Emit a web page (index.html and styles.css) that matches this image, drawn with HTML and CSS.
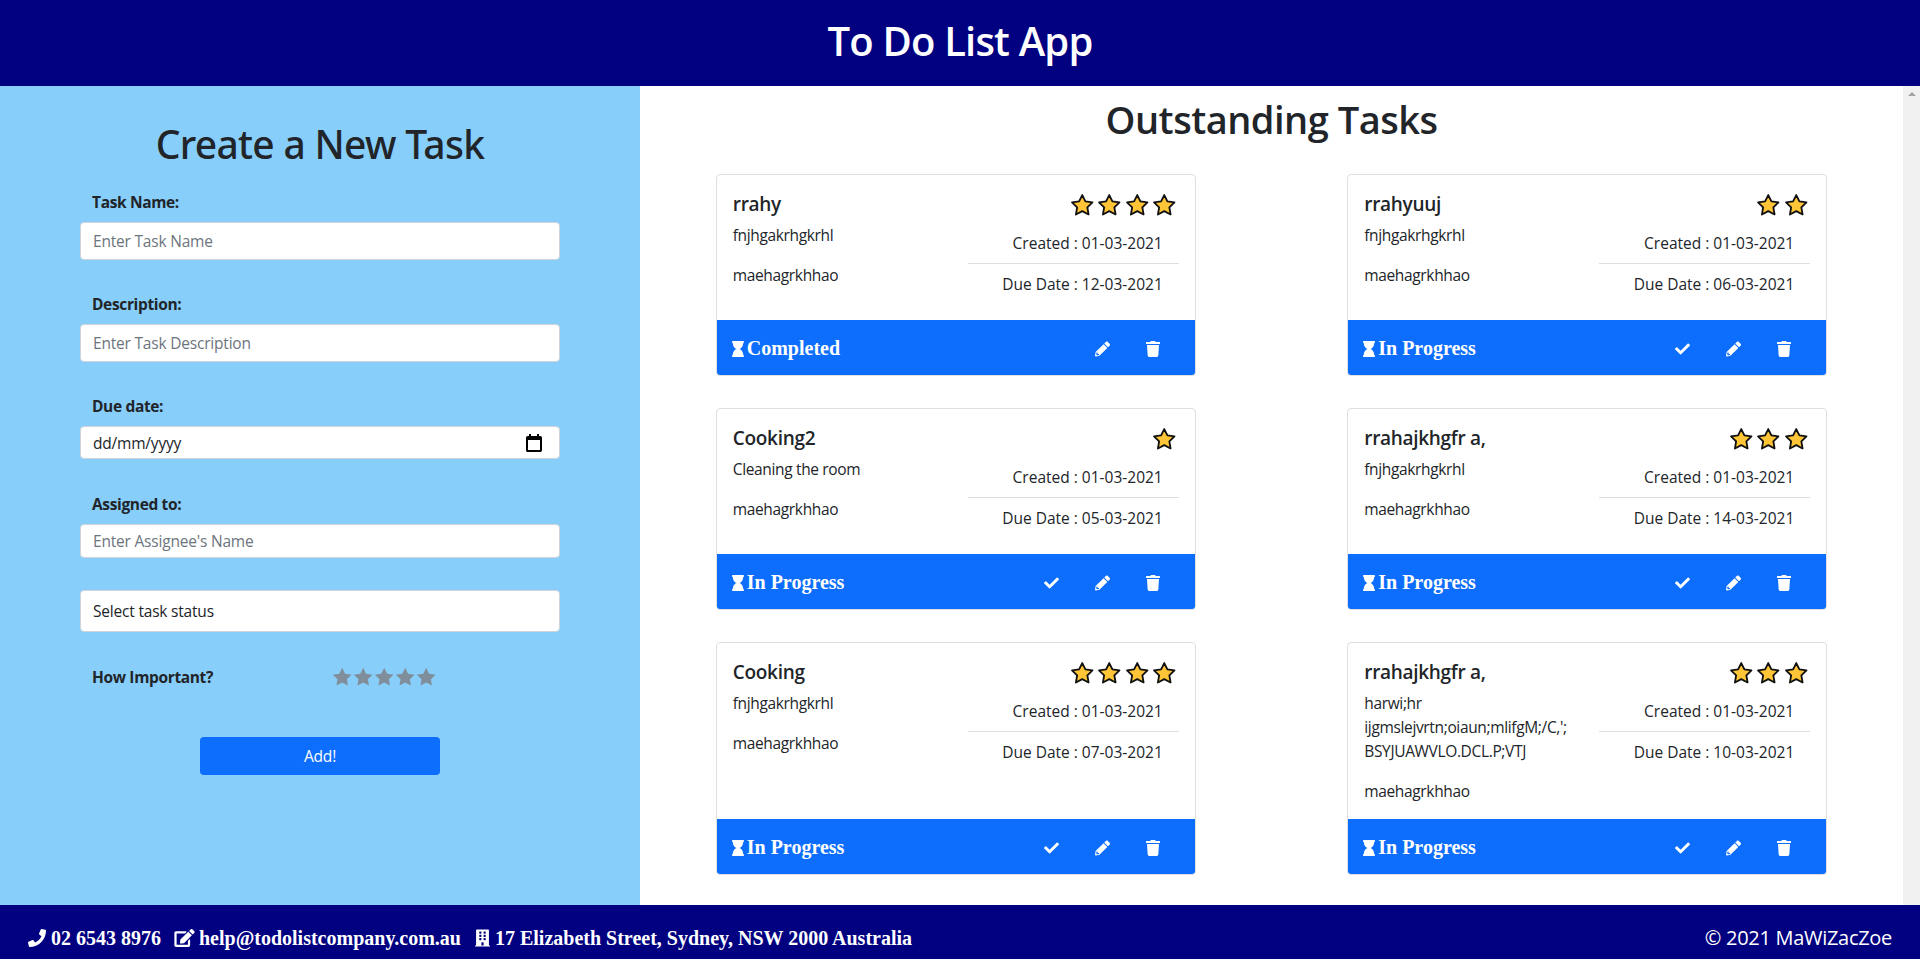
FILE: index.html
```html
<!DOCTYPE html>
<html lang="en">
<head>
  <meta charset="UTF-8">
  <meta name="viewport" content="width=device-width, initial-scale=1.0">
  <title>To Do List App</title>
  <link rel="stylesheet" href="styles.css">
</head>
<body>
  <!-- icon set, reused below with <use> -->
  <svg class="icon-defs" xmlns="http://www.w3.org/2000/svg">
    <symbol id="i-star" viewBox="0 0 24 24"><polygon points="12 2 15.09 8.26 22 9.27 17 14.14 18.18 21.02 12 17.77 5.82 21.02 7 14.14 2 9.27 8.91 8.26"/></symbol>
    <symbol id="i-check" viewBox="0 0 512 512"><path d="M173.898 439.404l-166.4-166.4c-9.997-9.997-9.997-26.206 0-36.204l36.203-36.204c9.997-9.998 26.207-9.998 36.204 0L192 312.69 432.095 72.596c9.997-9.997 26.207-9.997 36.204 0l36.203 36.204c9.997 9.997 9.997 26.206 0 36.204l-294.4 294.401c-9.998 9.997-26.207 9.997-36.204-.001z"/></symbol>
    <symbol id="i-pencil" viewBox="0 0 512 512"><path d="M497.9 142.1l-46.1 46.1c-4.7 4.7-12.3 4.7-17 0l-111-111c-4.7-4.7-4.7-12.3 0-17l46.1-46.1c18.7-18.7 49.1-18.7 67.9 0l60.1 60.1c18.8 18.7 18.8 49.1 0 67.9zM284.2 99.8L21.6 362.4.4 483.9c-2.9 16.4 11.4 30.6 27.8 27.8l121.5-21.3 262.6-262.6c4.7-4.7 4.7-12.3 0-17l-111-111c-4.8-4.7-12.4-4.7-17.1 0zM88 424h48v36.3l-64.5 11.3-31.1-31.1L51.7 376H88v48z"/></symbol>
    <symbol id="i-trash" viewBox="0 0 448 512"><path d="M432 32H312l-9.4-18.7A24 24 0 0 0 281.1 0H166.8a23.72 23.72 0 0 0-21.4 13.3L136 32H16A16 16 0 0 0 0 48v32a16 16 0 0 0 16 16h416a16 16 0 0 0 16-16V48a16 16 0 0 0-16-16zM53.2 467a48 48 0 0 0 47.9 45h245.8a48 48 0 0 0 47.9-45L416 128H32z"/></symbol>
    <symbol id="i-hourglass" viewBox="0 0 384 512"><path d="M360 64c13.255 0 24-10.745 24-24V24c0-13.255-10.745-24-24-24H24C10.745 0 0 10.745 0 24v16c0 13.255 10.745 24 24 24 0 90.965 51.016 167.734 120.842 192C75.016 280.266 24 357.035 24 448c-13.255 0-24 10.745-24 24v16c0 13.255 10.745 24 24 24h336c13.255 0 24-10.745 24-24v-16c0-13.255-10.745-24-24-24 0-90.965-51.016-167.734-120.842-192C308.984 231.734 360 154.965 360 64z"/></symbol>
    <symbol id="i-phone" viewBox="0 0 512 512"><path d="M493.4 24.6l-104-24c-11.3-2.6-22.9 3.3-27.5 13.9l-48 112c-4.2 9.8-1.4 21.3 6.9 28l60.6 49.6c-36 76.7-98.9 140.5-177.2 177.2l-49.6-60.6c-6.8-8.3-18.2-11.1-28-6.9l-112 48C3.9 366.5-2 378.1.6 389.4l24 104C27.1 504.2 36.7 512 48 512c256.1 0 464-207.5 464-464 0-11.2-7.7-20.9-18.6-23.4z"/></symbol>
    <symbol id="i-edit" viewBox="0 0 576 512"><path d="M402.6 83.2l90.2 90.2c3.8 3.8 3.8 10 0 13.8L274.4 405.6l-92.8 10.3c-12.4 1.4-22.9-9.1-21.5-21.5l10.3-92.8L388.8 83.2c3.8-3.8 10-3.8 13.8 0zm162-22.9l-48.8-48.8c-15.2-15.2-39.9-15.2-55.2 0l-35.4 35.4c-3.8 3.8-3.8 10 0 13.8l90.2 90.2c3.8 3.8 10 3.8 13.8 0l35.4-35.4c15.2-15.3 15.2-40 0-55.2zM384 346.2V448H64V128h231.8c3.2 0 6.2-1.3 8.5-3.5l40-40c7.6-7.6 2.2-20.5-8.5-20.5H48C21.5 64 0 85.5 0 112v352c0 26.5 21.5 48 48 48h352c26.5 0 48-21.5 48-48V306.2c0-10.7-12.9-16-20.5-8.5l-40 40c-2.2 2.3-3.5 5.3-3.5 8.5z"/></symbol>
    <symbol id="i-building" viewBox="0 0 448 512"><path d="M436 480h-20V24c0-13.255-10.745-24-24-24H56C42.745 0 32 10.745 32 24v456H12c-6.627 0-12 5.373-12 12v20h448v-20c0-6.627-5.373-12-12-12zM128 76c0-6.627 5.373-12 12-12h40c6.627 0 12 5.373 12 12v40c0 6.627-5.373 12-12 12h-40c-6.627 0-12-5.373-12-12V76zm0 96c0-6.627 5.373-12 12-12h40c6.627 0 12 5.373 12 12v40c0 6.627-5.373 12-12 12h-40c-6.627 0-12-5.373-12-12v-40zm52 148h-40c-6.627 0-12-5.373-12-12v-40c0-6.627 5.373-12 12-12h40c6.627 0 12 5.373 12 12v40c0 6.627-5.373 12-12 12zm76 160h-64v-84c0-6.627 5.373-12 12-12h40c6.627 0 12 5.373 12 12v84zm64-172c0 6.627-5.373 12-12 12h-40c-6.627 0-12-5.373-12-12v-40c0-6.627 5.373-12 12-12h40c6.627 0 12 5.373 12 12v40zm0-96c0 6.627-5.373 12-12 12h-40c-6.627 0-12-5.373-12-12v-40c0-6.627 5.373-12 12-12h40c6.627 0 12 5.373 12 12v40zm0-96c0 6.627-5.373 12-12 12h-40c-6.627 0-12-5.373-12-12V76c0-6.627 5.373-12 12-12h40c6.627 0 12 5.373 12 12v40z"/></symbol>
    <symbol id="i-calendar" viewBox="0 0 16 18"><path d="M3 0h2v2h6V0h2v2h1.2C15.2 2 16 2.800 16 3.800v12.400c0 1-.8 1.800-1.800 1.800H1.800C.8 18 0 17.200 0 16.200V3.800C0 2.800.8 2 1.800 2H3V0zM2 6v10h12V6H2z"/></symbol>
  </svg>

  <header class="top-bar">
    <h1>To Do List App</h1>
  </header>

  <main class="layout">
    <section class="create-panel">
      <h2 class="create-title">Create a New Task</h2>
      <form class="task-form">
        <div class="field">
          <label for="task-name">Task Name:</label>
          <input class="control control-lg" id="task-name" type="text" placeholder="Enter Task Name">
        </div>
        <div class="field">
          <label for="task-desc">Description:</label>
          <input class="control control-lg" id="task-desc" type="text" placeholder="Enter Task Description">
        </div>
        <div class="field">
          <label>Due date:</label>
          <div class="control control-date">
            <span>dd/mm/yyyy</span>
            <svg class="calendar"><use href="#i-calendar"/></svg>
          </div>
        </div>
        <div class="field field-assign">
          <label for="task-who">Assigned to:</label>
          <input class="control control-sm" id="task-who" type="text" placeholder="Enter Assignee's Name">
        </div>
        <select class="control control-select">
          <option>Select task status</option>
        </select>
        <div class="rating-row">
          <label>How Important?</label>
          <div class="rating">
            <svg><use href="#i-star"/></svg>
            <svg><use href="#i-star"/></svg>
            <svg><use href="#i-star"/></svg>
            <svg><use href="#i-star"/></svg>
            <svg><use href="#i-star"/></svg>
          </div>
        </div>
        <button class="add-btn" type="button">Add!</button>
      </form>
    </section>

    <section class="tasks-panel">
      <h2 class="tasks-title">Outstanding Tasks</h2>
      <div class="task-grid">

        <article class="task-card">
          <div class="task-body">
            <div class="task-info">
              <h3>rrahy</h3>
              <p>fnjhgakrhgkrhl</p>
              <p>maehagrkhhao</p>
            </div>
            <div class="task-meta">
              <div class="stars">
                <svg><use href="#i-star"/></svg><svg><use href="#i-star"/></svg><svg><use href="#i-star"/></svg><svg><use href="#i-star"/></svg>
              </div>
              <div class="date">Created : 01-03-2021</div>
              <hr>
              <div class="date">Due Date : 12-03-2021</div>
            </div>
          </div>
          <div class="task-foot">
            <div class="status"><svg class="hourglass"><use href="#i-hourglass"/></svg>Completed</div>
            <div class="actions">
              <svg class="a-pencil"><use href="#i-pencil"/></svg>
              <svg class="a-trash"><use href="#i-trash"/></svg>
            </div>
          </div>
        </article>

        <article class="task-card">
          <div class="task-body">
            <div class="task-info">
              <h3>rrahyuuj</h3>
              <p>fnjhgakrhgkrhl</p>
              <p>maehagrkhhao</p>
            </div>
            <div class="task-meta">
              <div class="stars">
                <svg><use href="#i-star"/></svg><svg><use href="#i-star"/></svg>
              </div>
              <div class="date">Created : 01-03-2021</div>
              <hr>
              <div class="date">Due Date : 06-03-2021</div>
            </div>
          </div>
          <div class="task-foot">
            <div class="status"><svg class="hourglass"><use href="#i-hourglass"/></svg>In Progress</div>
            <div class="actions">
              <svg class="a-check"><use href="#i-check"/></svg>
              <svg class="a-pencil"><use href="#i-pencil"/></svg>
              <svg class="a-trash"><use href="#i-trash"/></svg>
            </div>
          </div>
        </article>

        <article class="task-card">
          <div class="task-body">
            <div class="task-info">
              <h3>Cooking2</h3>
              <p>Cleaning the room</p>
              <p>maehagrkhhao</p>
            </div>
            <div class="task-meta">
              <div class="stars">
                <svg><use href="#i-star"/></svg>
              </div>
              <div class="date">Created : 01-03-2021</div>
              <hr>
              <div class="date">Due Date : 05-03-2021</div>
            </div>
          </div>
          <div class="task-foot">
            <div class="status"><svg class="hourglass"><use href="#i-hourglass"/></svg>In Progress</div>
            <div class="actions">
              <svg class="a-check"><use href="#i-check"/></svg>
              <svg class="a-pencil"><use href="#i-pencil"/></svg>
              <svg class="a-trash"><use href="#i-trash"/></svg>
            </div>
          </div>
        </article>

        <article class="task-card">
          <div class="task-body">
            <div class="task-info">
              <h3>rrahajkhgfr a,</h3>
              <p>fnjhgakrhgkrhl</p>
              <p>maehagrkhhao</p>
            </div>
            <div class="task-meta">
              <div class="stars">
                <svg><use href="#i-star"/></svg><svg><use href="#i-star"/></svg><svg><use href="#i-star"/></svg>
              </div>
              <div class="date">Created : 01-03-2021</div>
              <hr>
              <div class="date">Due Date : 14-03-2021</div>
            </div>
          </div>
          <div class="task-foot">
            <div class="status"><svg class="hourglass"><use href="#i-hourglass"/></svg>In Progress</div>
            <div class="actions">
              <svg class="a-check"><use href="#i-check"/></svg>
              <svg class="a-pencil"><use href="#i-pencil"/></svg>
              <svg class="a-trash"><use href="#i-trash"/></svg>
            </div>
          </div>
        </article>

        <article class="task-card">
          <div class="task-body">
            <div class="task-info">
              <h3>Cooking</h3>
              <p>fnjhgakrhgkrhl</p>
              <p>maehagrkhhao</p>
            </div>
            <div class="task-meta">
              <div class="stars">
                <svg><use href="#i-star"/></svg><svg><use href="#i-star"/></svg><svg><use href="#i-star"/></svg><svg><use href="#i-star"/></svg>
              </div>
              <div class="date">Created : 01-03-2021</div>
              <hr>
              <div class="date">Due Date : 07-03-2021</div>
            </div>
          </div>
          <div class="task-foot">
            <div class="status"><svg class="hourglass"><use href="#i-hourglass"/></svg>In Progress</div>
            <div class="actions">
              <svg class="a-check"><use href="#i-check"/></svg>
              <svg class="a-pencil"><use href="#i-pencil"/></svg>
              <svg class="a-trash"><use href="#i-trash"/></svg>
            </div>
          </div>
        </article>

        <article class="task-card">
          <div class="task-body">
            <div class="task-info">
              <h3>rrahajkhgfr a,</h3>
              <p>harwi;hr<br>ijgmslejvrtn;oiaun;mlifgM;/C,';<br>BSYJUAWVLO.DCL.P;VTJ</p>
              <p>maehagrkhhao</p>
            </div>
            <div class="task-meta">
              <div class="stars">
                <svg><use href="#i-star"/></svg><svg><use href="#i-star"/></svg><svg><use href="#i-star"/></svg>
              </div>
              <div class="date">Created : 01-03-2021</div>
              <hr>
              <div class="date">Due Date : 10-03-2021</div>
            </div>
          </div>
          <div class="task-foot">
            <div class="status"><svg class="hourglass"><use href="#i-hourglass"/></svg>In Progress</div>
            <div class="actions">
              <svg class="a-check"><use href="#i-check"/></svg>
              <svg class="a-pencil"><use href="#i-pencil"/></svg>
              <svg class="a-trash"><use href="#i-trash"/></svg>
            </div>
          </div>
        </article>

      </div>
    </section>

    <div class="scroll-track"><span class="scroll-arrow"></span></div>
  </main>

  <footer class="bottom-bar">
    <div class="contact">
      <svg class="c-phone"><use href="#i-phone"/></svg><span class="c-text">02 6543 8976</span>
      <svg class="c-edit"><use href="#i-edit"/></svg><span class="c-text">help@todolistcompany.com.au</span>
      <svg class="c-building"><use href="#i-building"/></svg><span class="c-text">17 Elizabeth Street, Sydney, NSW 2000 Australia</span>
    </div>
    <div class="copyright">&copy; 2021 MaWiZacZoe</div>
  </footer>
</body>
</html>
```

FILE: styles.css
```css
* {
  box-sizing: border-box;
}

html, body {
  height: 100%;
}

body {
  margin: 0;
  display: flex;
  flex-direction: column;
  height: 959px;
  overflow: hidden;
  font-family: "Open Sans", "Noto Sans", sans-serif;
  font-size: 15.5px;
  line-height: 24px;
  letter-spacing: -0.35px;
  color: #212529;
  background-color: #fff;
}

.icon-defs {
  display: none;
}

.top-bar {
  flex: 0 0 86px;
  display: flex;
  align-items: center;
  justify-content: center;
  padding-bottom: 4px;
  background-color: #000080;
  color: #fff;
}

.top-bar h1 {
  margin: 0;
  font-size: 40px;
  font-weight: 600;
  line-height: 48px;
  letter-spacing: -0.8px;
}

.layout {
  flex: 1;
  min-height: 0;
  display: grid;
  grid-template-columns: 640px 1fr 17px;
}

/* left column */
.create-panel {
  padding: 34px 80px 0;
  background-color: #87cefa;
}

.create-title {
  margin: 0 0 22px;
  text-align: center;
  font-family: "Noto Sans", "Open Sans", sans-serif;
  font-size: 39px;
  font-weight: 500;
  line-height: 48px;
  letter-spacing: -0.7px;
}

.task-form {
  display: flex;
  flex-direction: column;
  gap: 32px;
}

.field label,
.rating-row label {
  display: block;
  padding-left: 12px;
  font-size: 15.5px;
  font-weight: 700;
  letter-spacing: -0.35px;
}

.field label {
  margin-bottom: 8px;
}

.field-assign {
  margin-top: 1px;
}

.control {
  display: block;
  width: 100%;
  padding: 0 12px;
  border: 1px solid #ced4da;
  border-radius: 4px;
  background-color: #fff;
  color: #212529;
  font-family: inherit;
  font-size: 15.5px;
  letter-spacing: -0.2px;
}

.control::placeholder {
  color: #6c757d;
  opacity: 1;
}

.control-lg {
  height: 38px;
}

.control-sm {
  height: 34px;
}

.control-date {
  height: 33px;
  display: flex;
  align-items: center;
  justify-content: space-between;
  padding-right: 17px;
}

.calendar {
  width: 16px;
  height: 18px;
  fill: #000;
}

.control-select {
  height: 42px;
  appearance: none;
  -webkit-appearance: none;
}

.rating-row {
  display: flex;
  align-items: center;
  justify-content: space-between;
  height: 24px;
  margin-top: 1px;
  padding-right: 123px;
}

.rating {
  display: flex;
}

.rating svg {
  width: 22.4px;
  height: 22.4px;
  fill: #808e9c;
}

.rating svg + svg {
  margin-left: -1.6px;
}

.add-btn {
  align-self: center;
  width: 240px;
  height: 38px;
  margin-top: 16px;
  border: none;
  border-radius: 4px;
  background-color: #0d6efd;
  color: #fff;
  font-family: inherit;
  font-size: 15.5px;
  letter-spacing: -0.2px;
}

/* right column */
.tasks-panel {
  min-width: 0;
  padding-top: 9px;
}

.tasks-title {
  margin: 0 0 31px;
  text-align: center;
  font-size: 38px;
  font-weight: 600;
  line-height: 48px;
  letter-spacing: -0.5px;
}

.task-grid {
  display: grid;
  grid-template-columns: 1fr 1fr;
  row-gap: 32px;
  justify-items: center;
}

.task-card {
  width: 480px;
  display: flex;
  flex-direction: column;
  border: 1px solid #dfdfdf;
  border-radius: 4px;
  overflow: hidden;
}

.task-body {
  flex: 1;
  min-height: 145px;
  display: grid;
  grid-template-columns: 1fr 211px;
  padding: 14px 16px 16px;
}

.task-info h3 {
  margin: 0 0 4px;
  font-size: 19px;
  font-weight: 600;
  line-height: 30px;
  letter-spacing: -0.3px;
}

.task-info p {
  margin: 0 0 16px;
}

.task-info p:last-child {
  margin-bottom: 0;
}

.task-meta {
  display: flex;
  flex-direction: column;
}

.stars {
  display: flex;
  justify-content: flex-end;
  align-items: center;
  gap: 2.9px;
  height: 32px;
  padding-right: 2px;
}

.stars svg {
  width: 24.5px;
  height: 24.5px;
  fill: #ffc537;
  stroke: #111;
  stroke-width: 1.8;
  stroke-linejoin: round;
  overflow: visible;
}

.date {
  padding-right: 16px;
  text-align: right;
  letter-spacing: 0;
}

.stars + .date {
  margin-top: 10px;
}

.task-meta hr {
  width: 100%;
  margin: 8px 0;
  border: none;
  border-top: 1px solid #dedede;
}

.task-foot {
  flex: 0 0 55px;
  display: flex;
  align-items: center;
  justify-content: space-between;
  padding: 0 35px 0 15px;
  background-color: #0d6efd;
  color: #fff;
}

.status {
  display: flex;
  align-items: center;
  gap: 3px;
  font-family: "Liberation Serif", serif;
  font-size: 20px;
  font-weight: 700;
  letter-spacing: 0;
}

.hourglass {
  width: 12px;
  height: 16px;
  fill: #fff;
  margin-top: 2px;
}

.actions {
  display: flex;
  align-items: center;
  gap: 36px;
  padding-top: 2px;
}

.actions svg {
  fill: #fff;
  height: 16px;
}

.a-check,
.a-pencil {
  width: 15px;
}

.a-trash {
  width: 14px;
}

/* fake browser scrollbar */
.scroll-track {
  display: flex;
  justify-content: center;
  padding-top: 6px;
  background-color: #f1f1f1;
}

.scroll-arrow {
  width: 0;
  height: 0;
  border-left: 4px solid transparent;
  border-right: 4px solid transparent;
  border-bottom: 4px solid #a3a3a3;
}

/* footer */
.bottom-bar {
  flex: 0 0 54px;
  display: flex;
  align-items: center;
  justify-content: space-between;
  padding: 12px 28px 0;
  background-color: #000080;
  color: #fff;
}

.contact {
  display: flex;
  align-items: center;
  font-family: "Liberation Serif", serif;
  font-size: 20px;
  font-weight: 700;
  letter-spacing: 0;
}

.contact svg {
  fill: #fff;
  height: 18px;
}

.c-text {
  margin-left: 5px;
}

.c-phone {
  width: 18px;
}

.c-edit {
  width: 21px;
  margin-left: 13px;
}

.c-edit + .c-text {
  margin-left: 4px;
}

.c-building {
  width: 15px;
  margin-left: 14px;
}

.copyright {
  font-size: 20px;
  letter-spacing: -0.3px;
}
```
